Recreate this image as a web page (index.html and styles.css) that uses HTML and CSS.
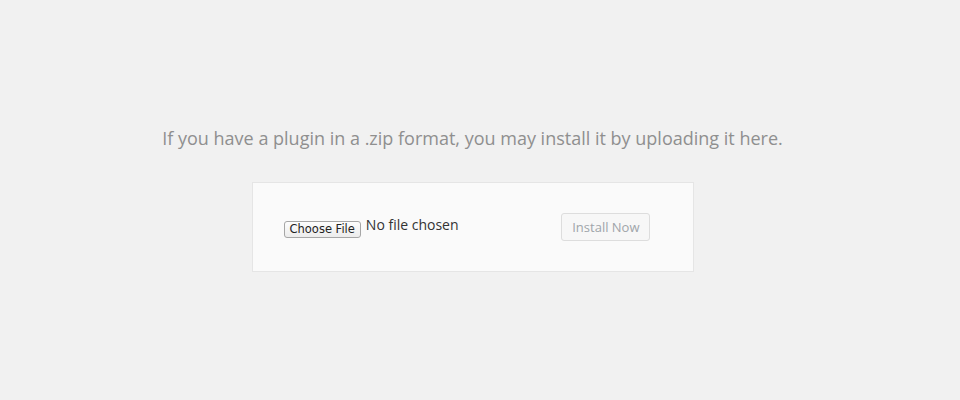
FILE: index.html
```html
<!DOCTYPE html>
<html lang="en">
    <head>
        <meta charset="UTF-8" />
        <meta name="viewport" content="width=device-width, initial-scale=1.0" />
        <title>Upload Plugin</title>
        <link rel="stylesheet" href="styles.css">
    </head>

    <body>
        <div class="upload-plugin">
            <p class="install-help">If you have a plugin in a .zip format, you may install it by uploading it here.</p>
            <form class="upload-form">
                <div class="file-field">
                    <button type="button" class="file-btn">Choose File</button>
                    <span class="file-name">No file chosen</span>
                </div>
                <button type="button" class="install-btn" disabled>Install Now</button>
            </form>
        </div>
    </body>
</html>
```

FILE: styles.css
```css
html,
body {
    margin: 0;
    padding: 0;
}

body {
    background: #f1f1f1;
    color: #444;
    font-family: "Open Sans", "Liberation Sans", sans-serif;
}

.upload-plugin {
    display: flex;
    flex-direction: column;
    align-items: center;
    padding: 124px 15px 0 0;
}

.install-help {
    margin: 0;
    color: #8f8f8f;
    font-size: 18px;
    line-height: 28px;
}

.upload-form {
    display: flex;
    align-items: center;
    justify-content: space-between;
    box-sizing: border-box;
    width: 442px;
    height: 90px;
    margin-top: 30px;
    padding: 0 43px 0 31px;
    background: #fafafa;
    border: 1px solid #e5e5e5;
}

.file-field {
    display: flex;
    align-items: center;
    gap: 5px;
    margin-top: 4px;
}

.file-btn {
    height: 17px;
    padding: 0 5px;
    background: linear-gradient(#fdfdfd, #ececec);
    border: 1px solid #a6a6a6;
    border-radius: 3px;
    color: #222;
    font: 11.5px/15px "DejaVu Sans", "Liberation Sans", sans-serif;
}

.file-name {
    color: #333;
    font-size: 14px;
    position: relative;
    top: -5px;
}

.install-btn {
    height: 28px;
    padding: 0 9px 0 10px;
    background: #f7f7f7;
    border: 1px solid #dddddd;
    border-radius: 3px;
    color: #a0a5aa;
    font: 13px/26px "Open Sans", "Liberation Sans", sans-serif;
}
```
